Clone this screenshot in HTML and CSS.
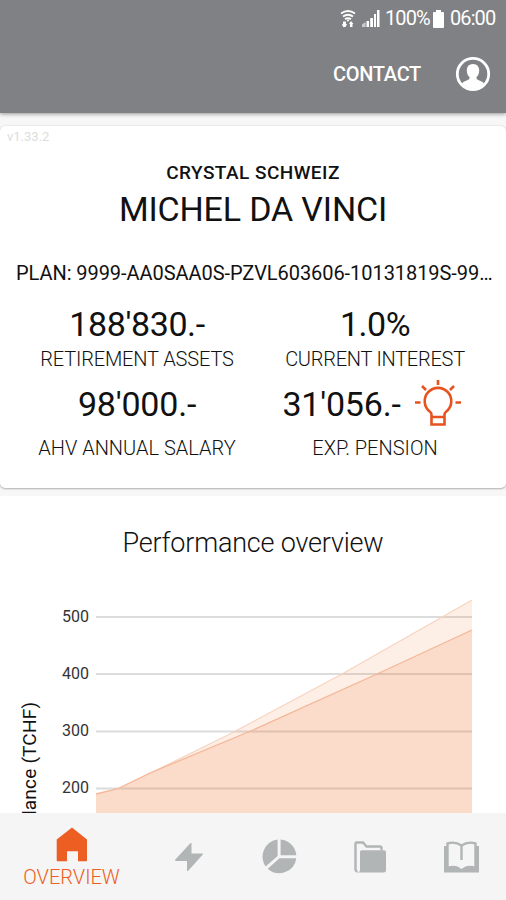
FILE: index.html
```html
<!DOCTYPE html>
<html lang="en">
<head>
    <meta charset="UTF-8">
    <meta name="viewport" content="width=device-width, initial-scale=1.0">
    <title>Overview</title>
    <link rel="stylesheet" href="styles.css">
</head>
<body>
    <!-- Header with status bar -->
    <header class="header">
        <div class="status">
            <svg class="status-wifi" width="16" height="18" viewBox="0 0 16 18">
                <path d="M1 3.500Q8-1.500 15 3.500M3 6.500Q8 3 13 6.500M5 9.200Q8 7 11 9.200" fill="none" stroke="#fff" stroke-width="1.900"/>
                <path d="M8 12L6.300 9.500h3.400zM3 17l-1-3h1v-2.500h3V14h1l-1.500 3zM10 17v-3H9l2-3 2.500 3h-1v3z" fill="#fff"/>
            </svg>
            <svg class="status-signal" width="18" height="17" viewBox="0 0 18 17">
                <path d="M0 17v-2.500L3.500 12v5z" fill="#fff" opacity=".6"/>
                <path d="M4.500 17v-6H7v6zM8.200 17V8h2.800v9zM12 17V4h2v13zM15 17V0h2.500v17z" fill="#fff"/>
            </svg>
            <span class="status-text battery-text">100%</span>
            <svg class="status-battery" width="11" height="18" viewBox="0 0 11 18">
                <path d="M3 0h5v2h2q1 0 1 1v14q0 1-1 1H1q-1 0-1-1V3q0-1 1-1h2z" fill="#fff"/>
            </svg>
            <span class="status-text clock">06:00</span>
        </div>
        <div class="toolbar">
            <span class="contact">CONTACT</span>
            <svg width="36" height="36" viewBox="0 0 36 36">
                <circle cx="18" cy="18" r="15.700" fill="none" stroke="#fff" stroke-width="2.800"/>
                <path d="M18 8c4 0 6.200 2.800 6.200 6.400 0 3-1.200 5.300-2.700 6.500v1.700c1 2 5.500 2 7.500 5A15 15 0 0 1 18 33 15 15 0 0 1 7 27.600c2-3 6.500-3 7.500-5v-1.700c-1.500-1.200-2.700-3.500-2.700-6.500C11.800 10.800 14 8 18 8z" fill="#fff"/>
            </svg>
        </div>
    </header>

    <main class="content">
        <!-- Plan summary -->
        <section class="card">
            <div class="version">v1.33.2</div>
            <div class="company">CRYSTAL SCHWEIZ</div>
            <h1 class="name">MICHEL DA VINCI</h1>
            <div class="plan">PLAN: 9999-AA0SAA0S-PZVL603606-10131819S-99…</div>
            <div class="stats">
                <div class="stat">
                    <div class="value assets">188'830.-</div>
                    <div class="label label-assets">RETIREMENT ASSETS</div>
                </div>
                <div class="stat">
                    <div class="value interest">1.0%</div>
                    <div class="label label-interest">CURRENT INTEREST</div>
                </div>
                <div class="stat stat-tall">
                    <div class="value">98'000.-</div>
                    <div class="label">AHV ANNUAL SALARY</div>
                </div>
                <div class="stat stat-tall">
                    <div class="value pension">
                        <span>31'056.-</span>
                        <svg class="bulb" width="46" height="46" viewBox="0 0 46 46" fill="none" stroke="#e8521f" stroke-width="2.600">
                            <path d="M16.500 37v-2.500c0-1.500-.5-2-1.500-2.700A13.300 13.300 0 1 1 31 31.800c-1 .7-1.500 1.200-1.500 2.700V37M16.500 37h13v7.500h-13z"/>
                            <path d="M23 0v5M7 6l4 4M39 6l-4 4M0 22.500h5.500M40.500 22.500H46"/>
                        </svg>
                    </div>
                    <div class="label">EXP. PENSION</div>
                </div>
            </div>
        </section>

        <!-- Performance chart -->
        <section class="chart-section">
            <h2 class="chart-title">Performance overview</h2>
            <svg class="chart" width="506" height="229" viewBox="0 585 506 229">
                <g stroke="#dcdcdc" stroke-width="2">
                    <path d="M96 617H472M96 674H472M96 731.500H472M96 788.500H472"/>
                </g>
                <path d="M96 794L117 789.500 230 734 342 674 472 600V814H96z" fill="#ef7530" fill-opacity=".12"/>
                <path d="M96 794L117 789 150 773 253 730 377 674 472 630V814H96z" fill="#ef7530" fill-opacity=".15"/>
                <path d="M117 789.500L230 734 342 674 472 600" fill="none" stroke="#f8d3bf" stroke-width="1.200"/>
                <path d="M96 794L117 789 150 773 253 730 377 674 472 630" fill="none" stroke="#f4b798" stroke-width="1.300"/>
                <path d="M96 813.500H472" stroke="#dfb9a5"/>
                <g class="ticks">
                    <text x="89" y="622">500</text>
                    <text x="89" y="679">400</text>
                    <text x="89" y="736">300</text>
                    <text x="89" y="793">200</text>
                </g>
                <text class="axis-title" transform="translate(35.500 815) rotate(-90)">lance (TCHF)</text>
            </svg>
        </section>
    </main>

    <!-- Bottom navigation -->
    <nav class="nav">
        <div class="nav-item active">
            <svg width="32" height="35" viewBox="0 0 32 35"><path d="M16 .5L31 12.500V33.500q0 .8-.8.800H22V24.300H11V34.300H1.500q-.8 0-.8-.8V12.500z" fill="#ec5e22"/></svg>
            <span class="nav-label">OVERVIEW</span>
        </div>
        <div class="nav-item">
            <svg width="28" height="28" viewBox="0 0 28 28"><path d="M15.500 0q1-.3 1 .8V10.500H27.500q.9.300.3 1L13 28q-1 .5-1-.8V18H1q-1.500-.4-.6-1.400z" fill="#b1b5b5"/></svg>
        </div>
        <div class="nav-item">
            <svg width="36" height="36" viewBox="0 0 36 36" fill="#b1b5b5"><path d="M16.600.5V17L4.600 27.500A17.300 17.300 0 0 1 16.600.5zM19.600.5A17.300 17.300 0 0 1 35.300 16.200H19.600zM35.300 19.200A17.300 17.300 0 0 1 6.700 29.800L18.500 19.200z"/></svg>
        </div>
        <div class="nav-item">
            <svg width="33" height="32" viewBox="0 0 33 32"><path d="M3.500 30.500Q1.500 30.500 1.500 28V2.500Q1.500 1.500 2.500 1.500H9L12.500 5.500H26Q27.500 5.500 27.500 7V9" fill="none" stroke="#b1b5b5" stroke-width="2.400"/><path d="M7.500 9.300H30Q32 9.300 32 11.300V29Q32 31.500 29.500 31.500H3q3 0 3-3V11q0-1.700 1.500-1.700z" fill="#b1b5b5"/></svg>
        </div>
        <div class="nav-item">
            <svg width="35" height="32" viewBox="0 0 35 32"><path d="M0 5H4V25.500Q12 23 17.500 28 23 23 31 25.500V5H35V31.500H0z" fill="#b1b5b5"/><path d="M3.500 26V2.500Q11 0 17.500 4.500 24 0 31.500 2.500V26M17.500 4V19" fill="none" stroke="#b1b5b5" stroke-width="2.400"/></svg>
        </div>
    </nav>
</body>
</html>
```
FILE: styles.css
```css
/* Page */
body { margin: 0; height: 900px; overflow: hidden; display: flex; flex-direction: column; background: #f7f7f7; color: #111; font-family: Roboto, sans-serif; }
svg { display: block; flex: none; }

/* Header */
.header { height: 113px; flex: none; box-sizing: border-box; background: #808184; color: #fff; box-shadow: 0 1px 4px rgba(0,0,0,.4); z-index: 1; }
.status { height: 37px; display: flex; align-items: center; justify-content: flex-end; padding-right: 9px; }
.status-wifi { margin-right: 6px; }
.status-signal { margin-right: 5px; }
.status-text { font-size: 20px; line-height: 37px; letter-spacing: -.9px; white-space: nowrap; }
.battery-text { width: 48px; }
.clock { width: 47px; margin-left: 6px; }
.toolbar { height: 74px; display: flex; align-items: center; justify-content: flex-end; padding-right: 15px; gap: 34px; }
.contact { font-size: 20px; font-weight: 500; letter-spacing: -.3px; }

/* Summary card */
.content { flex: 1; min-height: 0; padding-top: 13px; }
.card { height: 362px; background: #fff; border-radius: 5px; box-shadow: 0 0 2px rgba(0,0,0,.15), 0 1px 2px rgba(0,0,0,.25); text-align: center; overflow: hidden; }
.version { height: 21px; padding-left: 7px; font-size: 13px; line-height: 21px; color: #ddd; text-align: left; }
.company { margin-top: 14px; font-size: 19px; font-weight: 500; line-height: 24px; letter-spacing: .45px; }
.name { margin: 2px 0 0; font-size: 34px; font-weight: 400; line-height: 44px; letter-spacing: -.15px; }
.plan { margin: 30px 0 0 16px; font-size: 20px; line-height: 24px; letter-spacing: -.06px; text-align: left; white-space: nowrap; }
.stats { display: grid; grid-template-columns: 1fr 1fr; margin-top: 19px; padding: 0 12px 0 18px; }
.stat { height: 80px; }
.value { height: 40px; font-size: 34px; line-height: 40px; letter-spacing: -.2px; white-space: nowrap; }
.assets { letter-spacing: -.4px; }
.interest { letter-spacing: -.5px; }
.label { margin-top: 3px; font-size: 20px; font-weight: 300; line-height: 24px; white-space: nowrap; }
.label-assets { letter-spacing: -.15px; }
.label-interest { letter-spacing: -.25px; }
.stat-tall .label { margin-top: 12px; }
.pension { display: flex; justify-content: center; gap: 14px; margin-right: 7px; }
.bulb { margin-top: -4px; }

/* Chart */
.chart-section { margin-top: 8px; padding-top: 27px; background: #fff; text-align: center; }
.chart-title { margin: 0 0 22px; font-size: 27px; font-weight: 300; line-height: 40px; letter-spacing: -.2px; }
.ticks { font-size: 16px; text-anchor: end; fill: #333; }
.axis-title { font-size: 19px; letter-spacing: .2px; fill: #111; }

/* Bottom navigation */
.nav { height: 87px; flex: none; display: grid; grid-template-columns: 143px 91px 90px 92px 90px; background: #f5f5f5; z-index: 1; }
.nav-item { display: flex; flex-direction: column; align-items: center; justify-content: center; }
.active { justify-content: flex-start; padding-top: 14px; }
.nav-label { margin-top: 3px; font-size: 20px; font-weight: 300; line-height: 24px; color: #ec5e22; }
```
